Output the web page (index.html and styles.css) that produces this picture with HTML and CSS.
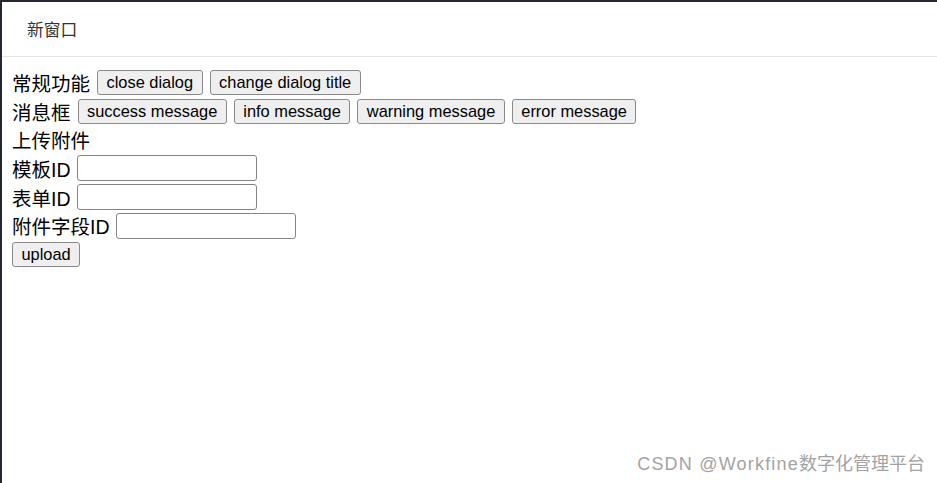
FILE: index.html
```html
<!DOCTYPE html>
<html lang="zh-CN">

<head>
    <meta charset="UTF-8">
    <meta name="viewport" content="width=device-width, initial-scale=1.0">
    <title>新窗口</title>
    <link rel="stylesheet" href="styles.css">
</head>

<body>

    <div class="frame">
        <div class="dialog-header">新窗口</div>
        <div class="dialog-body">
            <div class="row">
                <span>常规功能</span>
                <button>close dialog</button>
                <button>change dialog title</button>
            </div>
            <div class="row">
                <span>消息框</span>
                <button>success message</button>
                <button>info message</button>
                <button>warning message</button>
                <button>error message</button>
            </div>
            <div class="row">
                <span>上传附件</span>
            </div>
            <div class="row">
                <label for="templateId">模板ID</label>
                <input type="text" id="templateId">
            </div>
            <div class="row">
                <label for="formId">表单ID</label>
                <input type="text" id="formId">
            </div>
            <div class="row">
                <label for="fieldId">附件字段ID</label>
                <input type="text" id="fieldId">
            </div>
            <div class="row">
                <button>upload</button>
            </div>
        </div>
        <div class="watermark"><span class="wm-latin">CSDN @Workfine</span>数字化管理平台</div>
    </div>

</body>

</html>
```

FILE: styles.css
```css
/* Basic Reset */
* {
    margin: 0;
    padding: 0;
    box-sizing: border-box;
}

body {
    font-family: 'Liberation Sans', 'Noto Sans CJK SC', sans-serif;
    background-color: #fff;
    width: 937px;
    height: 483px;
    overflow: hidden;
}

/* Dialog frame */
.frame {
    position: relative;
    height: 483px;
    border-top: 2px solid #23272f;
    border-left: 2px solid #23272f;
    background-color: #fff;
}

.dialog-header {
    height: 55px;
    padding-left: 25px;
    display: flex;
    align-items: center;
    font-size: 16.8px;
    color: #333;
    border-bottom: 1px solid #e6e6e6;
}

.dialog-body {
    padding: 11px 10px 0 10px;
    font-size: 19.5px;
    color: #000;
}

.row {
    display: flex;
    align-items: center;
    gap: 7px;
    height: 28.7px;
}

.row label {
    margin-right: -1px;
}

button {
    font-family: 'Liberation Sans', sans-serif;
    font-size: 16.4px;
    height: 25px;
    padding: 0 8.5px;
    color: #000;
    background-color: #efefef;
    border: 1px solid #8a8a8a;
    border-radius: 3px;
}

input[type="text"] {
    width: 180px;
    height: 26px;
    border: 1px solid #858585;
    border-radius: 3px;
    font-size: 16px;
    padding: 0 3px;
    outline: none;
}

/* CSDN watermark */
.watermark {
    position: absolute;
    right: 12px;
    bottom: 9px;
    font-size: 18px;
    line-height: 20px;
    color: #a3a3a3;
}

.wm-latin {
    letter-spacing: 1.2px;
}
```
